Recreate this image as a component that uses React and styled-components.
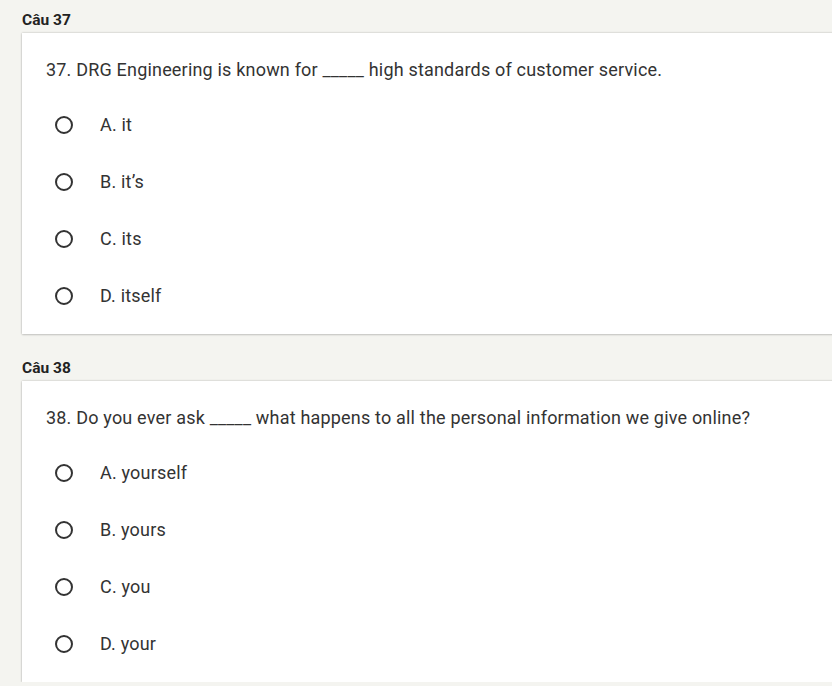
import styled, { createGlobalStyle } from "styled-components";

const GlobalStyle = createGlobalStyle`
  body {
    margin: 0;
    background: #f4f4f0;
    font-family: Roboto, "Liberation Sans", sans-serif;
    overflow: hidden;
  }
`;

const Page = styled.div`
  display: flex;
  flex-direction: column;
  gap: 24px;
  padding: 10px 0 0 22px;
`;

const Section = styled.section`
  display: flex;
  flex-direction: column;
  gap: 3px;
`;

const Label = styled.div`
  font-size: 15.5px;
  font-weight: 700;
  line-height: 20px;
  color: #222;
`;

const Card = styled.div`
  width: 880px;
  background: #fff;
  box-shadow: 0 0 2px rgba(0, 0, 0, 0.25), 0 1px 2px rgba(0, 0, 0, 0.12);
  padding: 24px 24px 10px;
  box-sizing: border-box;
`;

const Question = styled.div`
  font-size: 18px;
  letter-spacing: 0.19px;
  line-height: 26px;
  color: #333;
  margin-bottom: 13px;
`;

const Options = styled.div`
  display: flex;
  flex-direction: column;
`;

const Option = styled.label`
  display: flex;
  align-items: center;
  height: 57px;
  font-size: 18px;
  letter-spacing: 0.19px;
  color: #333;
  cursor: pointer;
`;

const Radio = styled.span`
  width: 14px;
  height: 14px;
  border: 2px solid #333;
  border-radius: 50%;
  margin: 0 27px 0 9px;
  flex-shrink: 0;
`;

const questions = [
  {
    id: 37,
    text: "37. DRG Engineering is known for _____ high standards of customer service.",
    options: ["A. it", "B. it\u2019s", "C. its", "D. itself"],
  },
  {
    id: 38,
    text: "38. Do you ever ask _____ what happens to all the personal information we give online?",
    options: ["A. yourself", "B. yours", "C. you", "D. your"],
  },
];

export default function App() {
  return (
    <>
      <GlobalStyle />
      <Page>
        {questions.map((q) => (
          <Section key={q.id}>
            <Label>Câu {q.id}</Label>
            <Card>
              <Question>{q.text}</Question>
              <Options>
                {q.options.map((o) => (
                  <Option key={o}>
                    <Radio />
                    {o}
                  </Option>
                ))}
              </Options>
            </Card>
          </Section>
        ))}
      </Page>
    </>
  );
}
